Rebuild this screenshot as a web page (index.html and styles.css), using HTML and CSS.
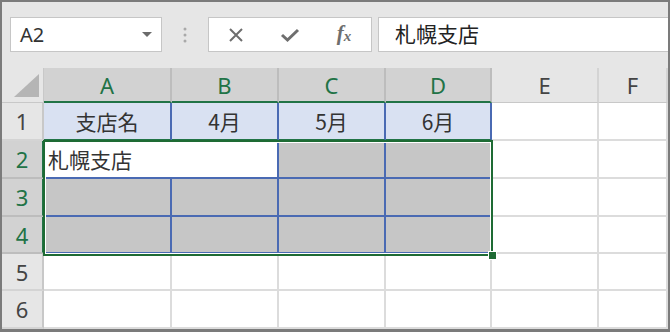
FILE: index.html
```html
<!DOCTYPE html>
<html>

<head>
    <meta charset="UTF-8">
    <title>Sheet</title>
    <link rel="stylesheet" href="styles.css">
</head>

<body>
    <div class="window">
        <div class="toolbar">
            <div class="namebox">
                <span>A2</span>
                <span class="arrow"></span>
            </div>
            <div class="grip">
                <svg width="4" height="16" viewBox="0 0 4 16">
                    <circle cx="2" cy="2" r="1.5" />
                    <circle cx="2" cy="8" r="1.5" />
                    <circle cx="2" cy="14" r="1.5" />
                </svg>
            </div>
            <div class="fxbox">
                <span class="btn btn-x">
                    <svg width="16" height="16" viewBox="0 0 16 16">
                        <path d="M2 2 L14 14 M14 2 L2 14" />
                    </svg>
                </span>
                <span class="btn btn-ok">
                    <svg width="20" height="16" viewBox="0 0 20 16">
                        <path d="M2 8 L7.5 13 L18 3" />
                    </svg>
                </span>
                <span class="btn btn-fx"><i>f</i><i class="sub">x</i></span>
            </div>
            <div class="formula">札幌支店</div>
        </div>

        <div class="sheet">
            <div class="corner">
                <svg width="25" height="23" viewBox="0 0 25 23">
                    <polygon points="25,0 25,23 0,23" />
                </svg>
            </div>
            <div class="colhead sel">A</div>
            <div class="colhead sel">B</div>
            <div class="colhead sel">C</div>
            <div class="colhead sel">D</div>
            <div class="colhead">E</div>
            <div class="colhead">F</div>

            <div class="rowhead">1</div>
            <div class="cell title">支店名</div>
            <div class="cell title">4月</div>
            <div class="cell title">5月</div>
            <div class="cell title last">6月</div>
            <div class="cell"></div>
            <div class="cell"></div>

            <div class="rowhead sel">2</div>
            <div class="cell data active">札幌支店</div>
            <div class="cell data shade"></div>
            <div class="cell data shade last"></div>
            <div class="cell"></div>
            <div class="cell"></div>

            <div class="rowhead sel">3</div>
            <div class="cell data shade"></div>
            <div class="cell data shade"></div>
            <div class="cell data shade"></div>
            <div class="cell data shade last"></div>
            <div class="cell"></div>
            <div class="cell"></div>

            <div class="rowhead sel">4</div>
            <div class="cell data shade"></div>
            <div class="cell data shade"></div>
            <div class="cell data shade"></div>
            <div class="cell data shade last"></div>
            <div class="cell"></div>
            <div class="cell"></div>

            <div class="rowhead">5</div>
            <div class="cell"></div>
            <div class="cell"></div>
            <div class="cell"></div>
            <div class="cell"></div>
            <div class="cell"></div>
            <div class="cell"></div>

            <div class="rowhead">6</div>
            <div class="cell"></div>
            <div class="cell"></div>
            <div class="cell"></div>
            <div class="cell"></div>
            <div class="cell"></div>
            <div class="cell"></div>

            <!-- selection frame over A2:D4 -->
            <div class="selection"></div>
            <div class="handle"></div>
        </div>
    </div>
</body>

</html>
```

FILE: styles.css
```css
* {
    box-sizing: border-box;
}

body {
    margin: 0;
    font-family: "Noto Sans", "Noto Sans CJK JP", sans-serif;
    color: #333;
}

.window {
    width: 670px;
    height: 332px;
    border: 2px solid #7b7b7b;
    border-bottom-width: 3px;
    background-color: #e6e6e6;
    overflow: hidden;
}

/* Formula bar */
.toolbar {
    display: flex;
    align-items: flex-start;
    height: 66px;
    padding: 15px 0 0 8px;
}

.namebox {
    display: flex;
    align-items: center;
    justify-content: space-between;
    width: 152px;
    height: 35px;
    padding: 0 9px 0 9px;
    background-color: #fff;
    border: 1px solid #c6c6c6;
    font-size: 20px;
    color: #333;
}

.namebox .arrow {
    width: 0;
    height: 0;
    border-left: 5px solid transparent;
    border-right: 5px solid transparent;
    border-top: 5px solid #6b6b6b;
}

.grip {
    display: flex;
    align-items: center;
    justify-content: center;
    width: 46px;
    height: 35px;
}

.grip svg {
    fill: #a9a9a9;
}

.fxbox {
    display: flex;
    align-items: center;
    width: 164px;
    height: 35px;
    background-color: #fff;
    border: 1px solid #c6c6c6;
}

.btn {
    display: flex;
    align-items: center;
    justify-content: center;
    height: 100%;
}

.btn-x {
    width: 53px;
}

.btn-ok {
    width: 56px;
}

.btn-fx {
    width: 52px;
    font-family: "Liberation Serif", serif;
    font-size: 21px;
    font-weight: bold;
    color: #6e6e6e;
    padding-bottom: 2px;
}

.btn-fx .sub {
    font-size: 15px;
    margin-top: 6px;
}

.btn svg path {
    fill: none;
    stroke: #6e6e6e;
}

.btn-x svg path {
    stroke-width: 2;
}

.btn-ok svg path {
    stroke-width: 3;
}

.formula {
    flex: 1;
    height: 35px;
    margin-left: 6px;
    padding-left: 16px;
    background-color: #fff;
    border: 1px solid #c6c6c6;
    border-right: none;
    font-family: "Noto Sans CJK JP", sans-serif;
    font-size: 21px;
    line-height: 31px;
    color: #222;
}

/* Grid */
.sheet {
    position: relative;
    display: grid;
    grid-template-columns: 42px 128px 107px 107px 106px 107px 1fr;
    grid-template-rows: 35px 38px 38px 38px 37px 37px 38px;
    background-color: #fff;
}

.corner {
    display: flex;
    align-items: flex-end;
    justify-content: flex-end;
    padding: 0 4px 5px 0;
    background-color: #e6e6e6;
    border-right: 1px solid #c8c8c8;
    border-bottom: 1px solid #c8c8c8;
}

.corner svg {
    fill: #b5b5b5;
}

.colhead {
    display: flex;
    align-items: center;
    justify-content: center;
    background-color: #e6e6e6;
    border-right: 2px solid #d4d4d4;
    border-bottom: 1px solid #c8c8c8;
    font-size: 22px;
    color: #444;
}

.colhead.sel {
    background-color: #d2d2d2;
    border-right-color: #bdbdbd;
    border-bottom: 2px solid #217346;
    color: #217346;
}

.rowhead {
    display: flex;
    align-items: center;
    justify-content: center;
    background-color: #e6e6e6;
    border-right: 2px solid #c8c8c8;
    border-bottom: 2px solid #d4d4d4;
    font-size: 22px;
    color: #444;
}

.rowhead.sel {
    background-color: #d2d2d2;
    border-right-color: #217346;
    border-bottom-color: #bdbdbd;
    color: #217346;
}

.cell {
    border-right: 2px solid #dcdcdc;
    border-bottom: 2px solid #dcdcdc;
    font-family: "Noto Sans CJK JP", sans-serif;
    font-size: 21px;
    color: #333;
}

.cell.title {
    display: flex;
    align-items: center;
    justify-content: center;
    background-color: #d9e1f2;
    border-right-color: #4a6ab3;
    border-bottom-color: #217346;
}

.cell.data {
    border-right-color: #4a6ab3;
    border-bottom-color: #4a6ab3;
}

.cell.shade {
    background-color: #c6c6c6;
}

.cell.active {
    grid-column: span 2;
    display: flex;
    align-items: center;
    padding-left: 4px;
    background-color: #fff;
}

.selection {
    position: absolute;
    left: 41px;
    top: 72px;
    width: 450px;
    height: 116px;
    border: 2px solid #1e6b34;
    box-shadow: inset 0 0 0 1px #fff;
    pointer-events: none;
}

.handle {
    position: absolute;
    left: 486px;
    top: 183px;
    width: 9px;
    height: 9px;
    background-color: #1e6b34;
    border: 1px solid #fff;
}
```
